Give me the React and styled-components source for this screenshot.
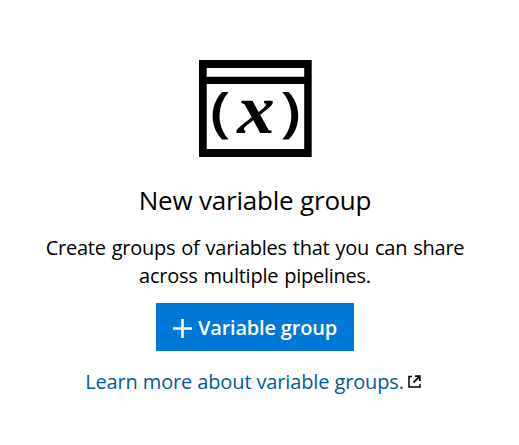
import React from "react";
import styled, { createGlobalStyle } from "styled-components";

const GlobalStyle = createGlobalStyle`
  body { margin: 0; background: #fff; }
  * { box-sizing: border-box; }
`;

const EmptyState = styled.main`
  width: 519px;
  height: 445px;
  padding: 60px 9px 0 0;
  display: flex;
  flex-direction: column;
  align-items: center;
  overflow: hidden;
  background: #fff;
  color: #000;
  font-family: "Open Sans", "Noto Sans", sans-serif;
  font-size: 20px;
  line-height: 28px;
  white-space: nowrap;
`;

const Illustration = styled.svg`
  display: block;
  flex: none;
  width: 113px;
  height: 97px;
`;

const Title = styled.h1`
  margin: 25px 0 0;
  font-size: 26px;
  line-height: 36px;
  font-weight: 400;
  letter-spacing: -0.2px;
`;

const Description = styled.p`
  margin: 16px 0 0;
  text-align: center;
  letter-spacing: -0.24px;
  word-spacing: 1px;
`;

const PrimaryButton = styled.button`
  width: 198px;
  height: 48px;
  margin-top: 13px;
  padding: 2px 0 0 17px;
  display: flex;
  align-items: center;
  gap: 6px;
  border: 0;
  background: #0078d7;
  color: #fff;
  font: inherit;
  font-weight: 600;
  letter-spacing: -0.2px;
`;

const PlusIcon = styled.svg`
  flex: none;
  width: 19px;
  height: 19px;
`;

const LearnMore = styled.a`
  display: flex;
  align-items: center;
  gap: 4px;
  margin-top: 17px;
  padding-right: 4px;
  color: #005a9e;
  letter-spacing: -0.13px;
  text-decoration: none;
`;

const ExternalIcon = styled.svg`
  flex: none;
  width: 13px;
  height: 13px;
  margin-bottom: 1px;
  color: #000;
`;

export default function App() {
  return (
    <>
      <GlobalStyle />
      <EmptyState>
        <Illustration viewBox="0 0 113 97" aria-label="Variable group">
          <path fillRule="evenodd" d="M0 0H112.7V97H0ZM7.7 8V16.7H105.2V8ZM7.7 24V89H105.2V24Z" />
          <g fontFamily="Open Sans, sans-serif" fontWeight="600" fontSize="54">
            <text transform="translate(11 71) scale(1.2 1)">(</text>
            <text transform="translate(81.3 71) scale(1.2 1)">)</text>
          </g>
          <text
            transform="translate(38.3 72.5) scale(1.07 1)"
            fontFamily="Liberation Serif, serif"
            fontWeight="700"
            fontStyle="italic"
            fontSize="70"
          >
            x
          </text>
        </Illustration>
        <Title>New variable group</Title>
        <Description>
          Create groups of variables that you can share
          <br />
          across multiple pipelines.
        </Description>
        <PrimaryButton>
          <PlusIcon viewBox="0 0 19 19" fill="none" stroke="currentColor" strokeWidth="2.6">
            <path d="M9.5 0V19M0 9.5H19" />
          </PlusIcon>
          Variable group
        </PrimaryButton>
        <LearnMore href="#">
          Learn more about variable groups.
          <ExternalIcon viewBox="0 0 13 13" fill="none" stroke="currentColor" strokeWidth="1.5">
            <path d="M4 1.5H1V12H12V9" />
            <path d="M7 1.2H11.8V6M11.8 1.2L5.5 7.5" strokeWidth="1.8" />
          </ExternalIcon>
        </LearnMore>
      </EmptyState>
    </>
  );
}
